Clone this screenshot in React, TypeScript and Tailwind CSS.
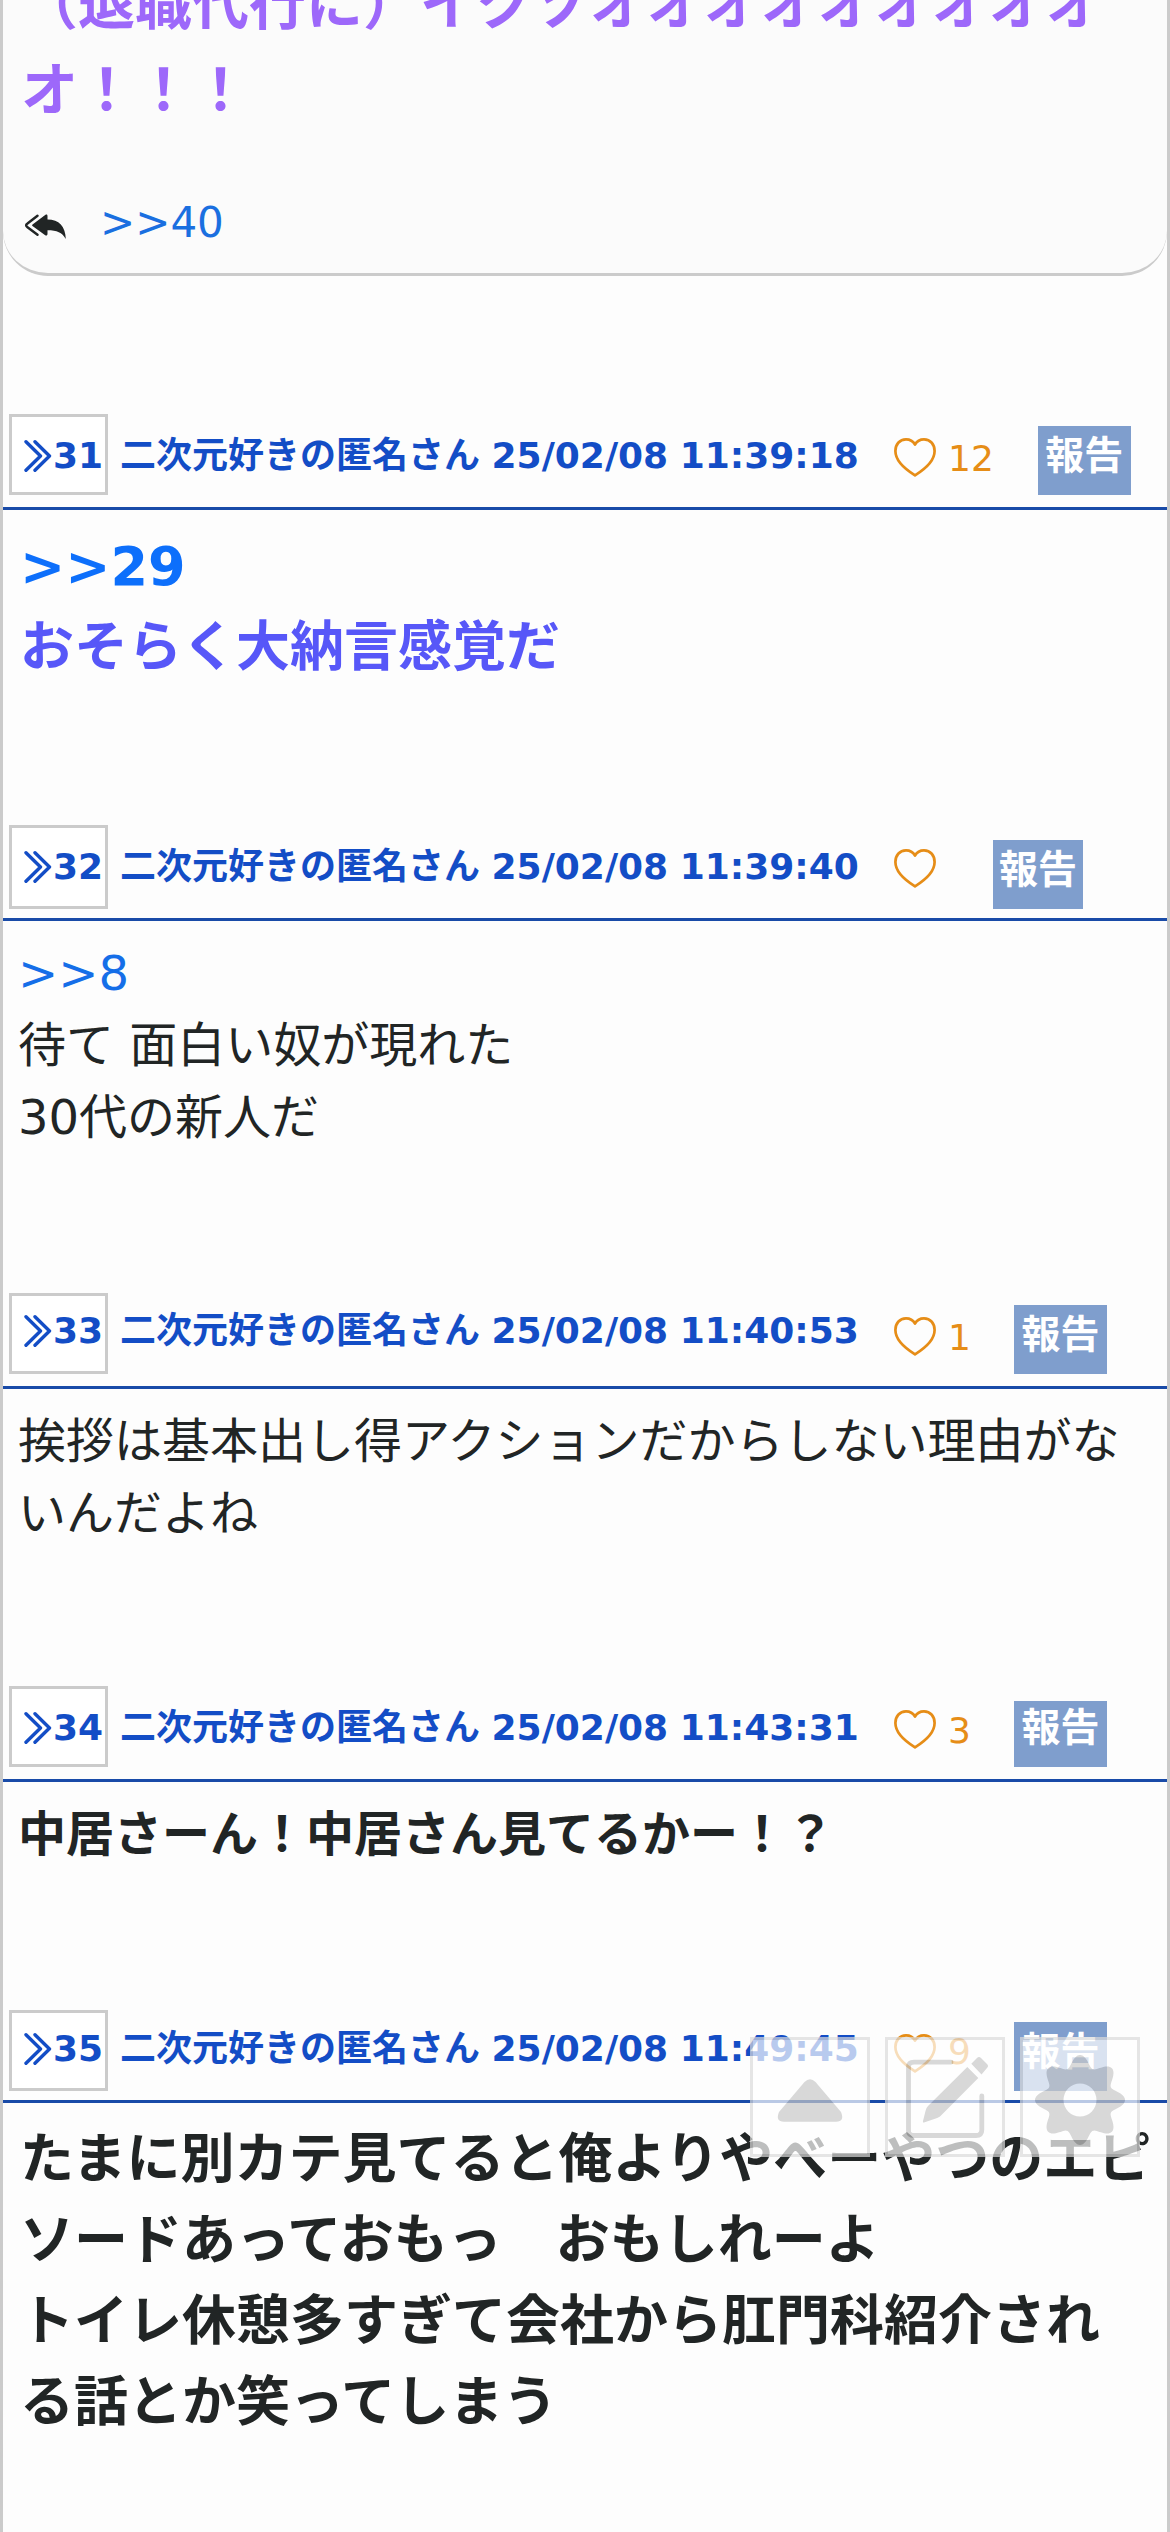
import React from "react";

type Post = {
  no: number;
  time: string;
  likes?: number;
  box: string;
  name: string;
  numberPad: string;
  heart: string;
  report: string;
  body: string;
  quote?: string;
  quoteClass?: string;
  lines: string[];
};

const posts: Post[] = [
  {
    no: 31,
    time: "25/02/08 11:39:18",
    likes: 12,
    box: "h-[81px]",
    numberPad: "pt-[12px]",
    name: "pt-[15px]",
    heart: "mt-6",
    report: "mt-3 ml-[44px] w-[93px] h-[69px] leading-[59px]",
    body: "h-[315px] pl-[17px] text-[54px] leading-[81px] font-bold text-[#5757f8]",
    quote: ">>29",
    quoteClass: "text-[#0d6ffb]",
    lines: ["おそらく大納言感覚だ"],
  },
  {
    no: 32,
    time: "25/02/08 11:39:40",
    box: "h-[84px]",
    numberPad: "pt-[12px]",
    name: "pt-[15px]",
    heart: "mt-6",
    report: "mt-[15px] ml-[57px] w-[90px] h-[69px] leading-[59px]",
    body: "h-[372px] pl-[15px] text-[48px] leading-[72px] text-[#212525]",
    quote: ">>8",
    quoteClass: "text-[#156ee8]",
    lines: ["待て 面白い奴が現れた", "30代の新人だ"],
  },
  {
    no: 33,
    time: "25/02/08 11:40:53",
    likes: 1,
    box: "h-[81px]",
    numberPad: "pt-[8px]",
    name: "pt-[11px]",
    heart: "mt-6",
    report: "mt-3 ml-[43px] w-[93px] h-[69px] leading-[59px]",
    body: "h-[297px] pl-[15px] text-[48px] leading-[72px] text-[#212525]",
    lines: ["挨拶は基本出し得アクションだからしない理由がな", "いんだよね"],
  },
  {
    no: 34,
    time: "25/02/08 11:43:31",
    likes: 3,
    box: "h-[81px]",
    numberPad: "pt-[12px]",
    name: "pt-[15px]",
    heart: "mt-6",
    report: "mt-[15px] ml-[43px] w-[93px] h-[66px] leading-[53px]",
    body: "h-[225px] pl-[15px] text-[48px] leading-[72px] font-bold text-[#212525]",
    lines: ["中居さーん！中居さん見てるかー！？"],
  },
  {
    no: 35,
    time: "25/02/08 11:49:45",
    likes: 9,
    box: "mt-[3px] h-[81px]",
    numberPad: "pt-[9px]",
    name: "pt-[15px]",
    heart: "mt-[27px]",
    report: "mt-[15px] ml-[43px] w-[93px] h-[69px] leading-[59px]",
    body: "h-[429px] pl-[17px] text-[54px] leading-[81px] font-bold text-[#212525]",
    lines: [
      "たまに別カテ見てると俺よりやべーやつのエピ",
      "ソードあっておもっ　おもしれーよ",
      "トイレ休憩多すぎて会社から肛門科紹介され",
      "る話とか笑ってしまう",
    ],
  },
];

const Chevrons = () => (
  <svg className="mt-[11px] h-8 w-7 shrink-0" viewBox="0 0 28 32" fill="none" stroke="currentColor" strokeWidth="3.4" strokeLinecap="round" strokeLinejoin="round">
    <path d="M2 1.8 16.500 16 2 30.2M11 1.8 25.500 16 11 30.2" />
  </svg>
);

const Heart = () => (
  <svg className="h-[39px] w-[42px]" viewBox="0 0 42 39" fill="none" stroke="currentColor" strokeWidth="2.7" strokeLinejoin="round">
    <path d="M21 6.6C19 3 15.5 1.4 12 1.4 5.5 1.4 1.4 6.5 1.4 13 1.4 22 10 30.500 21 37.300 32 30.500 40.600 22 40.600 13 40.600 6.500 36.500 1.400 30 1.400 26.500 1.400 23 3 21 6.600Z" />
  </svg>
);

const ReplyAll = () => (
  <svg className="mt-[23px] h-[26px] w-[42px]" viewBox="0 0 42 26">
    <path d="M13.500 1.800 3.500 9.500Q.8 11.300 3.500 13.300L13.500 20.700" fill="none" stroke="#212525" strokeWidth="2.500" strokeLinecap="round" />
    <path d="M21.500.8C22.800 0 23.500.5 23.500 2V5.500C35 5.500 41.500 12.500 41.800 25 38 18.500 33 16.300 23.500 16.300V19.800C23.500 21.500 22.500 22 21.200 21.200L8.500 12Q7.500 11.200 8.500 10.400Z" fill="#212525" />
  </svg>
);

const gearPath = (() => {
  const pts: string[] = [];
  for (let i = 0; i < 240; i++) {
    const a = (i / 240) * Math.PI * 2;
    const r = 39.2 + 5.8 * Math.cos(8 * a);
    pts.push(`${(60 + r * Math.sin(a)).toFixed(2)} ${(60 - r * Math.cos(a)).toFixed(2)}`);
  }
  return `M${pts.join("L")}ZM76.500 60A16.500 16.500 0 1 0 43.500 60A16.500 16.500 0 1 0 76.500 60Z`;
})();

const FloatButton = ({ children }: { children: React.ReactNode }) => (
  <button className="h-[120px] w-[120px] border-[3px] border-[#dbdbdb] bg-white opacity-70">
    <svg className="-m-[3px] h-[120px] w-[120px]" viewBox="0 0 120 120" fill="#c9c9c9">
      {children}
    </svg>
  </button>
);

const PostItem = ({ p }: { p: Post }) => (
  <article>
    <header className="flex h-24 items-start border-b-[3px] border-[#194ba8] pl-[6px] text-[36px] leading-[54px] text-[#134dc6]">
      <a className={`flex w-[99px] shrink-0 items-start border-[3px] border-[#cbcbcb] bg-white pl-3 font-bold ${p.box} ${p.numberPad}`}>
        <Chevrons />
        <span className="pl-px">{p.no}</span>
      </a>
      <span className={`w-[786px] shrink-0 pl-[12px] font-bold [word-spacing:-1px] ${p.name}`}>二次元好きの匿名さん {p.time}</span>
      <span className={`shrink-0 text-[#e68d17] ${p.heart}`}>
        <Heart />
      </span>
      {p.likes !== undefined && <span className="pl-3 pt-[18px] text-[#e68d17]">{p.likes}</span>}
      <button className={`shrink-0 bg-[#7f9ecd] text-center text-[39px] font-bold text-white ${p.report}`}>
        <span className="block h-full">報告</span>
      </button>
    </header>
    <div className={`pt-4 whitespace-pre ${p.body}`}>
      {p.quote && <a className={`block ${p.quoteClass}`}>{p.quote}</a>}
      {p.lines.map((l) => (
        <p key={l}>{l}</p>
      ))}
    </div>
  </article>
);

export default function App() {
  return (
    <main lang="ja" className="relative h-[2532px] w-[1170px] overflow-hidden border-x-[3px] border-[#cbcbcb] bg-[#fdfdfd] font-['DejaVu_Sans','Noto_Sans_CJK_JP',sans-serif]">
      <section className="h-[276px] overflow-hidden rounded-b-[45px] border-b-[3px] border-[#cbcbcb] bg-[#fbfbfb]">
        <div className="-mt-[38px] pl-[18px] text-[57px] leading-[85.5px] font-bold whitespace-pre text-[#9d68fa]">
          <p>（退職代行に）イクゾオオオオオオオオオ</p>
          <p>オ！！！</p>
        </div>
        <div className="mt-[58px] flex items-start gap-[34px] pl-[21px] text-[42px] leading-[63px]">
          <ReplyAll />
          <a className="text-[#1a6fe0]">&gt;&gt;40</a>
        </div>
      </section>
      <div className="mt-[138px]">
        {posts.map((p) => (
          <PostItem key={p.no} p={p} />
        ))}
      </div>
      <nav className="absolute top-[2037px] right-[27px] flex gap-[15px]">
        <FloatButton>
          <path d="M54.500 45Q60 39.500 65.500 45L91 75Q95 84.500 86 84.700H34Q25 84.500 29 75Z" />
        </FloatButton>
        <FloatButton>
          <path d="M66 25.200H29Q23.500 25.200 23.500 30V94Q23.500 98.500 29 98.500H91Q96.800 98.500 96.800 93V59" fill="none" stroke="#c9c9c9" strokeWidth="4.800" strokeLinecap="round" />
          <path d="M82.300 30 93.300 41 55 79.500Q53 81 50 81.800L39 85.500Q37.500 86 38 84L40.500 74Q41 71 43 69Z" />
          <path d="M86.300 26.700 92 21Q94 19 96 21L102 27Q104 29 102 31L96.500 37.500Z" />
        </FloatButton>
        <FloatButton>
          <g transform="translate(0 3)">
            <path fillRule="evenodd" d={gearPath} />
          </g>
        </FloatButton>
      </nav>
    </main>
  );
}
